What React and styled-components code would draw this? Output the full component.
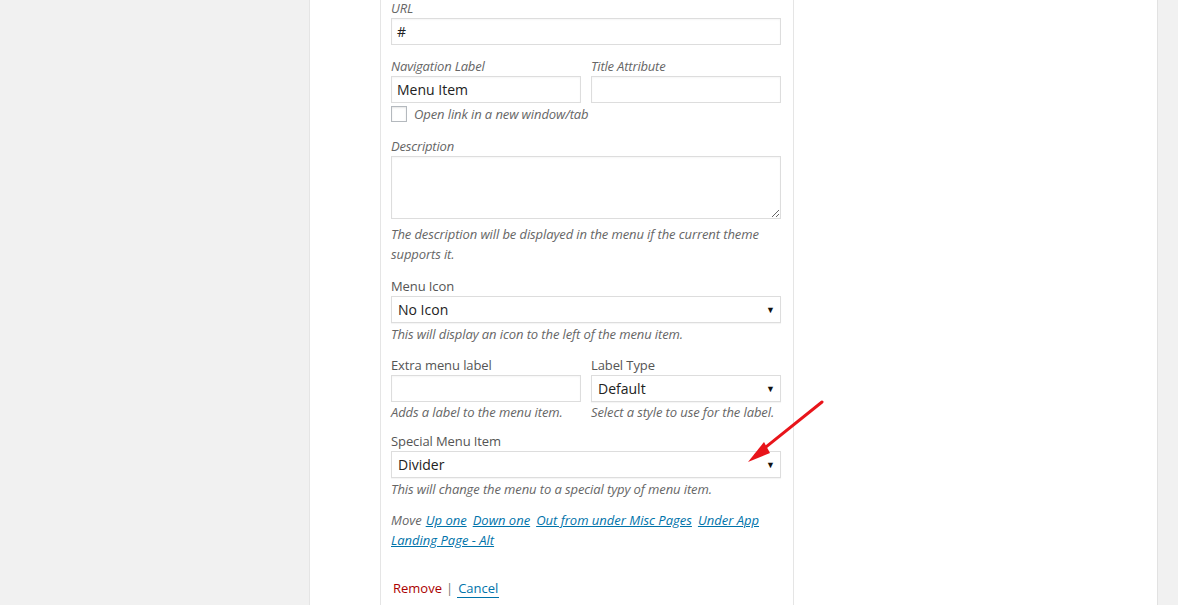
import styled, { createGlobalStyle } from "styled-components";

const GlobalStyle = createGlobalStyle`
  html, body {
    margin: 0;
    padding: 0;
    background: #f1f1f1;
    font-family: "Open Sans", "Liberation Sans", sans-serif;
    color: #444;
  }
  * { box-sizing: border-box; }
`;

const Page = styled.div`
  position: relative;
  display: flex;
  width: 1178px;
  height: 605px;
  overflow: hidden;
`;

const LeftGutter = styled.div`
  width: 309px;
  flex-shrink: 0;
`;

const MainPanel = styled.div`
  width: 849px;
  flex-shrink: 0;
  background: #fff;
  border-left: 1px solid #e5e5e5;
  border-right: 1px solid #e2e2e2;
  padding-left: 70px;
`;

const ItemSettings = styled.div`
  width: 414px;
  height: 100%;
  border-left: 1px solid #e5e5e5;
  border-right: 1px solid #e5e5e5;
  padding: 0 12px 0 10px;
`;

const Field = styled.div`
  margin-top: ${(p) => p.$mt || 0}px;
`;

const Row = styled.div`
  display: grid;
  grid-template-columns: 190px 190px;
  column-gap: 10px;
  margin-top: ${(p) => p.$mt || 0}px;
`;

const Label = styled.div`
  font-size: 13px;
  line-height: 16px;
  height: 16px;
  color: ${(p) => (p.$italic ? "#666" : "#555")};
  font-style: ${(p) => (p.$italic ? "italic" : "normal")};
  letter-spacing: ${(p) => (p.$italic ? "-0.18px" : "-0.1px")};
  margin-bottom: 2px;
  white-space: nowrap;
`;

const TextInput = styled.div`
  height: 27px;
  border: 1px solid #ddd;
  box-shadow: inset 0 1px 2px rgba(0, 0, 0, 0.04);
  background: #fff;
  font-size: 14px;
  line-height: 25px;
  padding-left: 5px;
  color: #222;
`;

const TextArea = styled.textarea`
  display: block;
  width: 390px;
  height: 63px;
  border: 1px solid #ddd;
  box-shadow: inset 0 1px 2px rgba(0, 0, 0, 0.04);
  background: #fff;
  margin: 0;
  font-family: inherit;
  outline: none;
`;

const SelectBox = styled.div`
  height: 27px;
  border: 1px solid #ddd;
  box-shadow: 0 1px 1px rgba(0, 0, 0, 0.04);
  background: #fff;
  display: flex;
  align-items: center;
  justify-content: space-between;
  padding: 0 5px 0 6px;
  font-size: 14px;
  color: #222;
`;

const Caret = styled.span`
  font-size: 9px;
  color: #111;
  line-height: 1;
`;

const Help = styled.div`
  font-size: 13px;
  line-height: 20px;
  font-style: italic;
  letter-spacing: -0.1px;
  color: #666;
  margin-top: ${(p) => p.$mt || 0}px;
`;

const CheckRow = styled.div`
  display: flex;
  align-items: center;
  gap: 7px;
  margin-top: 3px;
  font-size: 13px;
  font-style: italic;
  letter-spacing: -0.1px;
  color: #666;
  height: 16px;
`;

const Checkbox = styled.span`
  width: 16px;
  height: 16px;
  border: 1px solid #b4b9be;
  background: #fff;
  box-shadow: inset 0 1px 2px rgba(0, 0, 0, 0.1);
`;

const MoveLine = styled.div`
  margin-top: 11px;
  font-size: 13px;
  line-height: 20px;
  font-style: italic;
  color: #666;
`;

const MoveLink = styled.a`
  color: #0073aa;
  text-decoration: underline;
  margin-left: ${(p) => (p.$first ? 4 : 6)}px;
  cursor: pointer;
`;

const Actions = styled.div`
  margin-top: 28px;
  font-size: 13px;
  line-height: 20px;
  padding-left: 2px;
  display: flex;
  align-items: center;
  gap: 4px;
  color: #777;
`;

const RemoveLink = styled.a`
  color: #a00;
  cursor: pointer;
`;

const CancelLink = styled.a`
  color: #0073aa;
  border-bottom: 1px solid #0073aa;
  line-height: 18px;
  padding: 0 1px;
  cursor: pointer;
`;

const Annotation = styled.svg`
  position: absolute;
  left: 740px;
  top: 395px;
  pointer-events: none;
`;

const Select = ({ value }) => (
  <SelectBox>
    <span>{value}</span>
    <Caret>▼</Caret>
  </SelectBox>
);

export default function App() {
  return (
    <>
      <GlobalStyle />
      <Page>
        <LeftGutter />
        <MainPanel>
          <ItemSettings>
            <Field>
              <Label $italic>URL</Label>
              <TextInput>#</TextInput>
            </Field>
            <Row $mt={13}>
              <div>
                <Label $italic>Navigation Label</Label>
                <TextInput>Menu Item</TextInput>
              </div>
              <div>
                <Label $italic>Title Attribute</Label>
                <TextInput />
              </div>
            </Row>
            <CheckRow>
              <Checkbox />
              <span>Open link in a new window/tab</span>
            </CheckRow>
            <Field $mt={16}>
              <Label $italic>Description</Label>
              <TextArea />
            </Field>
            <Help $mt={5}>
              The description will be displayed in the menu if the current theme
              supports it.
            </Help>
            <Field $mt={14}>
              <Label>Menu Icon</Label>
              <Select value="No Icon" />
            </Field>
            <Help $mt={1}>This will display an icon to the left of the menu item.</Help>
            <Row $mt={13}>
              <div>
                <Label>Extra menu label</Label>
                <TextInput />
                <Help>Adds a label to the menu item.</Help>
              </div>
              <div>
                <Label>Label Type</Label>
                <Select value="Default" />
                <Help>Select a style to use for the label.</Help>
              </div>
            </Row>
            <Field $mt={11}>
              <Label>Special Menu Item</Label>
              <Select value="Divider" />
            </Field>
            <Help $mt={1}>This will change the menu to a special typy of menu item.</Help>
            <MoveLine>
              Move
              <MoveLink $first>Up one</MoveLink>
              <MoveLink>Down one</MoveLink>
              <MoveLink>Out from under Misc Pages</MoveLink>
              <MoveLink>Under App Landing Page - Alt</MoveLink>
            </MoveLine>
            <Actions>
              <RemoveLink>Remove</RemoveLink>
              <span>|</span>
              <CancelLink>Cancel</CancelLink>
            </Actions>
          </ItemSettings>
        </MainPanel>
        <Annotation width="90" height="75" viewBox="0 0 90 75">
          <line x1="82" y1="7" x2="16" y2="60" stroke="#e8141a" strokeWidth="3" strokeLinecap="round" />
          <polygon points="8,67 24,47 30,58" fill="#e8141a" />
        </Annotation>
      </Page>
    </>
  );
}
